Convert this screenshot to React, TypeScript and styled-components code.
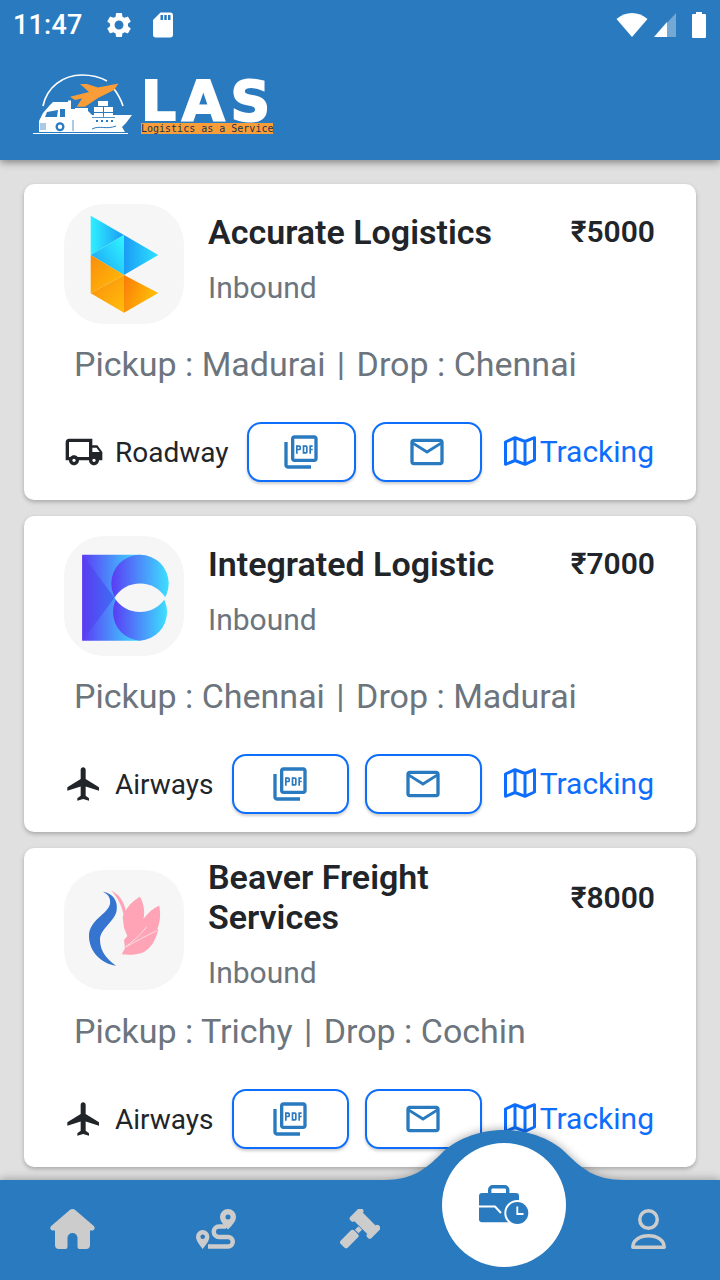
import React from 'react';

import {
    MdFlight,
    MdMailOutline,
    MdOutlineLocalShipping,
    MdOutlinePictureAsPdf,
    MdSdStorage,
    MdSettings,
} from 'react-icons/md';
import styled, { createGlobalStyle } from 'styled-components';

const BLUE = '#2a7abf';
const LINK = '#0d6efd';
const NAV_ICON = '#cccccc';

const GlobalStyle = createGlobalStyle`
    html, body {
        margin: 0;
        padding: 0;
        background: #e0e0e0;
    }

    * {
        box-sizing: border-box;
    }
`;

const Page = styled.div`
    position: relative;
    width: 720px;
    height: 1280px;
    overflow: hidden;
    background: #e0e0e0;
    font-family: Roboto, 'Noto Sans', sans-serif;
`;

const Header = styled.header`
    position: relative;
    z-index: 2;
    height: 160px;
    background: ${BLUE};
    box-shadow: 0 2px 8px rgba(0, 0, 0, 0.45);
`;

const StatusBar = styled.div`
    display: flex;
    align-items: center;
    height: 48px;
    padding: 2px 14px 0 13px;
    color: #fff;
`;

const Clock = styled.span`
    width: 91px;
    font-size: 27px;
    font-weight: 500;
    letter-spacing: 0.2px;
`;

const StatusLeft = styled.div`
    display: flex;
    align-items: center;
    flex: 1;
    gap: 14px;
    font-size: 30px;
`;

const StatusRight = styled.div`
    display: flex;
    align-items: center;
    gap: 6px;
`;

const LogoRow = styled.div`
    display: flex;
    align-items: center;
    height: 112px;
    padding: 2px 0 0 30px;
`;

const LogoMark = styled.svg`
    width: 105px;
    height: 80px;
`;

const LogoWords = styled.div`
    display: flex;
    flex-direction: column;
    width: 132px;
    margin: 2px 0 0 6px;
`;

const LogoName = styled.span`
    height: 44px;
    font-family: 'DejaVu Sans', sans-serif;
    font-size: 55px;
    font-weight: 700;
    line-height: 44px;
    letter-spacing: 6px;
    white-space: nowrap;
    color: #fff;
    -webkit-text-stroke: 2px #fff;
`;

const LogoTag = styled.span`
    height: 11px;
    background: #f99d39;
    font-family: 'DejaVu Sans Mono', monospace;
    font-size: 10px;
    line-height: 11px;
    white-space: nowrap;
    color: #24324f;
`;

const List = styled.main`
    display: flex;
    flex-direction: column;
    gap: 16px;
    padding: 24px;
`;

const Card = styled.article`
    display: flex;
    flex-direction: column;
    padding: 10px 41px 18px 40px;
    border-radius: 10px;
    background: #fff;
    box-shadow: 0 2px 4px rgba(0, 0, 0, 0.25);
`;

const TopRow = styled.div`
    display: flex;
    align-items: center;
`;

const Avatar = styled.div`
    flex: none;
    width: 120px;
    height: 120px;
    margin: 10px 24px 10px 0;
    border-radius: 40px;
    background: #f6f6f6;

    svg {
        display: block;
        width: 120px;
        height: 120px;
    }
`;

const Info = styled.div`
    flex: 1;
    margin-top: -1px;
    padding-bottom: 10px;
`;

const TitleRow = styled.div`
    display: flex;
    align-items: center;
    justify-content: space-between;
    margin-bottom: 18px;
`;

const Title = styled.h2`
    max-width: 340px;
    margin: 0;
    font-size: 34px;
    font-weight: 600;
    line-height: 40px;
    color: #212529;
`;

const Price = styled.span`
    font-size: 30px;
    font-weight: 600;
    color: #212529;
`;

const Direction = styled.div`
    font-size: 30px;
    line-height: 36px;
    color: #6c757d;
`;

const Route = styled.p`
    margin: 10px 0 38px 10px;
    font-size: 34px;
    line-height: 40px;
    color: #6c757d;
`;

const RouteDivider = styled.span`
    margin: 0 3px;
`;

const ActionRow = styled.div`
    display: flex;
    align-items: center;
    height: 60px;
    padding-right: 1px;
`;

const Mode = styled.div`
    display: flex;
    align-items: center;
    margin-right: 18px;
    font-size: 28px;
    color: #212529;

    svg {
        width: 40px;
        height: 40px;
        margin-right: 11px;
    }
`;

const DocButton = styled.button`
    flex: 1;
    display: flex;
    align-items: center;
    justify-content: center;
    height: 60px;
    margin-right: 16px;
    padding: 0;
    border: 2px solid ${LINK};
    border-radius: 14px;
    background: #fff;
    color: ${BLUE};
    box-shadow: 0 2px 3px rgba(0, 0, 0, 0.2);

    &:last-of-type {
        margin-right: 22px;
    }

    svg {
        width: 40px;
        height: 40px;
    }
`;

const TrackingLink = styled.a`
    display: flex;
    align-items: center;
    gap: 4px;
    padding-bottom: 2px;
    font-size: 30px;
    color: ${LINK};

    svg {
        width: 32px;
        height: 30px;
    }
`;

const BottomNav = styled.nav`
    position: absolute;
    left: 0;
    right: 0;
    bottom: 0;
    z-index: 3;
    display: grid;
    grid-template-columns: repeat(5, 144px);
    justify-items: center;
    height: 100px;
    padding-top: 29px;
    background: ${BLUE};
    color: ${NAV_ICON};
    filter: drop-shadow(0 -1px 4px rgba(0, 0, 0, 0.3));
`;

const Hump = styled.svg`
    position: absolute;
    left: 384px;
    top: -50px;
    width: 240px;
    height: 51px;
`;

const Fab = styled.button`
    position: absolute;
    left: 442px;
    top: -37px;
    display: flex;
    align-items: center;
    justify-content: center;
    width: 124px;
    height: 124px;
    padding: 0;
    border: 0;
    border-radius: 50%;
    background: #fff;
    color: ${BLUE};

    svg {
        width: 50px;
        height: 40px;
    }
`;

const NavIcon = styled.svg`
    display: block;
    height: 40px;
`;

const AccurateLogo = () => (
    <svg viewBox="0 0 120 120">
        <defs>
            <linearGradient id="acA" x1="0" y1="0" x2="1" y2="0">
                <stop offset="0" stopColor="#2ef0ff" />
                <stop offset="1" stopColor="#1b9bf5" />
            </linearGradient>
            <linearGradient id="acB" x1="1" y1="0.2" x2="0" y2="1">
                <stop offset="0" stopColor="#2ef0ff" />
                <stop offset="1" stopColor="#1b9bf5" />
            </linearGradient>
            <linearGradient id="acC" x1="0" y1="0" x2="1" y2="0">
                <stop offset="0" stopColor="#1b9bf5" />
                <stop offset="1" stopColor="#2ee2ff" />
            </linearGradient>
            <linearGradient id="acD" x1="0" y1="0" x2="1" y2="1">
                <stop offset="0" stopColor="#fb8c0c" />
                <stop offset="1" stopColor="#ffc107" />
            </linearGradient>
            <linearGradient id="acE" x1="0" y1="0" x2="1" y2="1">
                <stop offset="0" stopColor="#fb8c0c" />
                <stop offset="1" stopColor="#ffbe0a" />
            </linearGradient>
            <linearGradient id="acF" x1="0" y1="0" x2="1" y2="0.4">
                <stop offset="0" stopColor="#fb7a08" />
                <stop offset="1" stopColor="#ffc107" />
            </linearGradient>
        </defs>
        <polygon points="26.7,11.7 60,31 26.7,51" fill="url(#acA)" />
        <polygon points="26.7,51 60,31 60,71" fill="url(#acB)" />
        <polygon points="60,31 94.3,51 60,71" fill="url(#acC)" />
        <polygon points="26.7,51 60,71 26.7,89.3" fill="url(#acD)" />
        <polygon points="26.7,89.3 60,71 60,108.7" fill="url(#acE)" />
        <polygon points="60,71 94.3,89 60,108.7" fill="url(#acF)" />
    </svg>
);

const IntegratedLogo = () => (
    <svg viewBox="0 0 120 120">
        <defs>
            <linearGradient id="inA" x1="0" y1="0" x2="1" y2="0">
                <stop offset="0" stopColor="#5a3cf5" />
                <stop offset="1" stopColor="#3de0ff" />
            </linearGradient>
            <linearGradient id="inB" x1="0" y1="0" x2="1" y2="0">
                <stop offset="0" stopColor="#5a3cf0" />
                <stop offset="1" stopColor="#3f6df5" />
            </linearGradient>
        </defs>
        <path d="M18.3 18.7H76V104.7H18.3Z" fill="url(#inA)" />
        <path d="M18.3 18.7L50.5 61.7L18.3 104.7Z" fill="url(#inB)" />
        <path d="M76 18.7a28.7 28.7 0 0 1 0 57.4a28.7 28.7 0 0 1 0-57.4Z" fill="url(#inA)" />
        <path d="M76 47.4a28.7 28.7 0 0 1 0 57.3a28.7 28.7 0 0 1 0-57.3Z" fill="url(#inA)" />
        <path d="M50.5 61.7C56 52.5 65.5 47.4 76 47.4S96 52.5 101.5 61.7C96 70.9 86.500 76 76 76S56 70.9 50.5 61.7Z" fill="#f6f6f6" />
    </svg>
);

const BeaverLogo = () => (
    <svg viewBox="0 0 120 120">
        <path
            d="M38.7 21.7C49 23 54 31 52.7 40C51 52 36 58 36 70C36 82 44 90 52 95.7C38 94 25 82 25 66C25 50 44 44 46 34C47 28 44 24 38.7 21.7Z"
            fill="#3574cf"
        />
        <path d="M47.3 20.7C55 24 60 31 62 42L60 46C58 36 54 28 47.3 20.7Z" fill="#ffa4b6" />
        <path
            d="M58.7 46.7C62 38 68 31 76 26.700C80 34 81 42 79.500 49C84 43 89 38 95.300 35.700C97 45 96 53 93 59.300L94.300 59.300C92 70 86 81 76 83.500C70 85 63 85 57.700 84.300L61 78.300L60 70L63.300 66L60 58Z"
            fill="#ffa4b6"
        />
        <path d="M60 78C68 72 77 65 82.700 56.700M62 77C72 71 82 66 92.700 60.700" stroke="#fbdde3" strokeWidth="1" fill="none" />
    </svg>
);

const LasMark = () => (
    <LogoMark viewBox="0 0 105 80">
        <path d="M13 41C17 22 33 10 52 10C62 10 70 12 77 16M84 24C88 29 91 35 93 41" fill="none" stroke="#fff" strokeWidth="1.7" />
        <path
            d="M88.500 18.500L68 22.500L57 19H50L59 27L47 30L40 31.700L45 35L52 33.500L46.700 41.700H55L68 33L84 25Z"
            fill="#f99d39"
        />
        <path d="M3 68H98V69H3Z" fill="#fff" />
        <path
            d="M9 67V56L13 48L20 40L23 37H38V35.500H41V44H45V43H58V46L62 50H83H102L96 58L92 62L95 67Z"
            fill="#fff"
        />
        <path d="M17 47L28 45L27 52H15ZM30 44H35V52H30Z" fill={BLUE} />
        <path d="M11 58v7M13 58v7M15 58v7" stroke={BLUE} strokeWidth="0.8" />
        <circle cx="30" cy="61.700" r="4.500" fill={BLUE} />
        <circle cx="30" cy="61.700" r="2.200" fill="#fff" />
        <path d="M43 55V66" stroke={BLUE} strokeWidth="0.8" />
        <path d="M68 36H78V41H68ZM64 42H73V47H64ZM74 42H83V47H74ZM64 48H73V52H64ZM74 48H83V52H74Z" fill="#fff" />
        <path d="M62 41.500H85M62 47.500H85M73.500 41.500V52.500M62 52.500H85M67 36V41M79 36V41" stroke={BLUE} strokeWidth="0.8" />
        <path d="M66 55h2v2h-2zM71 55h2v2h-2zM76 55h2v2h-2zM81 55h2v2h-2z" fill={BLUE} />
        <path d="M62 64C70 60 76 65 86 61" fill="none" stroke={BLUE} strokeWidth="1" />
    </LogoMark>
);

const WifiIcon = () => (
    <svg width="32" height="24" viewBox="0 0 32 24">
        <path d="M16 24L0.500 6C5 2.200 10.200 0 16 0S27 2.200 31.500 6Z" fill="#fff" />
    </svg>
);

const CellIcon = () => (
    <svg width="22" height="24" viewBox="0 0 22 24">
        <path d="M22 0V24H0Z" fill="#fff" opacity="0.35" />
        <path d="M13 9V24H0Z" fill="#fff" />
    </svg>
);

const BatteryIcon = () => (
    <svg width="14" height="26" viewBox="0 0 14 26" style={{ marginLeft: 10 }}>
        <path d="M4 0H10V2H13A1 1 0 0 1 14 3V25A1 1 0 0 1 13 26H1A1 1 0 0 1 0 25V3A1 1 0 0 1 1 2H4Z" fill="#fff" />
    </svg>
);

const MapIcon = () => (
    <svg viewBox="0 0 32 30">
        <path
            d="M1.500 6L11 1.700L21 5.500L30.500 1.700V24L21 28.300L11 24.500L1.500 28.300ZM11 1.700V24.500M21 5.500V28.300"
            fill="none"
            stroke="currentColor"
            strokeWidth="3"
            strokeLinejoin="round"
        />
    </svg>
);

const HomeIcon = () => (
    <NavIcon viewBox="0 0 45 40" width="45">
        <path
            d="M22.500 0c1 0 2 .4 2.700 1L43.800 17c1.800 1.600.7 4.500-1.700 4.500H40V36a4 4 0 0 1-4 4H29.500a2 2 0 0 1-2-2V29a5 5 0 0 0-10 0v9a2 2 0 0 1-2 2H9a4 4 0 0 1-4-4V21.500H2.900c-2.400 0-3.500-2.900-1.700-4.500L19.800 1c.7-.6 1.700-1 2.700-1Z"
            fill="currentColor"
        />
    </NavIcon>
);

const RouteIcon = () => (
    <NavIcon viewBox="0 0 40 40" width="40">
        <path
            fillRule="evenodd"
            d="M32 0a8 8 0 0 1 8 8c0 4.500-5 9.500-8 12.500c-3-3-8-8-8-12.500a8 8 0 0 1 8-8Zm0 5.500a2.500 2.500 0 1 0 0 5a2.500 2.500 0 0 0 0-5Z"
            fill="currentColor"
        />
        <path
            fillRule="evenodd"
            d="M6.700 21a6.700 6.700 0 0 1 6.700 6.700c0 4-3.800 8.500-6.700 12.300C3.800 36.200 0 31.700 0 27.700A6.700 6.700 0 0 1 6.700 21Zm0 4.500a2.300 2.300 0 1 0 0 4.600a2.300 2.300 0 0 0 0-4.600Z"
            fill="currentColor"
        />
        <path d="M30 17.500H23a5.250 5.250 0 0 0 0 10.500H32a4.500 4.500 0 0 1 0 9.500H12" fill="none" stroke="currentColor" strokeWidth="4.500" />
    </NavIcon>
);

const GavelIcon = () => (
    <NavIcon viewBox="0 0 40 40" width="40">
        <g transform="rotate(45 25 14.300)" fill="currentColor">
            <rect x="15" y="8.300" width="20" height="12" />
            <rect x="10" y="6" width="6" height="16.500" rx="2.500" />
            <rect x="34" y="6" width="6" height="16.500" rx="2.500" />
            <rect x="22.500" y="21" width="5" height="5" />
            <rect x="20" y="27" width="10" height="19" rx="2.500" />
        </g>
    </NavIcon>
);

const UserIcon = () => (
    <NavIcon viewBox="0 0 35 40" width="35">
        <circle cx="17.500" cy="10.500" r="8.750" fill="none" stroke="currentColor" strokeWidth="3.500" />
        <path d="M1.800 38.200c0-7 7-11.500 15.700-11.500s15.700 4.500 15.700 11.500Z" fill="none" stroke="currentColor" strokeWidth="3.500" strokeLinejoin="round" />
    </NavIcon>
);

const JobHistoryIcon = () => (
    <svg viewBox="0 0 50 40">
        <rect x="10.700" y="1.700" width="18" height="9" rx="3" fill="none" stroke="currentColor" strokeWidth="3.400" />
        <path d="M3 8H37A3 3 0 0 1 40 11V34.300A3 3 0 0 1 37 37.300H3A3 3 0 0 1 0 34.300V11A3 3 0 0 1 3 8Z" fill="currentColor" />
        <path d="M0 21.500H16L22 28" fill="none" stroke="#fff" strokeWidth="2" />
        <circle cx="38.300" cy="28" r="13" fill="#fff" />
        <circle cx="38.300" cy="28" r="11" fill="currentColor" />
        <path d="M38.300 21.500V29H44.500" fill="none" stroke="#fff" strokeWidth="1.800" />
    </svg>
);

interface Shipment {
    id: number;
    company: string;
    price: number;
    pickup: string;
    drop: string;
    mode: 'Roadway' | 'Airways';
    logo: React.ReactNode;
}

const shipments: Shipment[] = [
    { id: 1, company: 'Accurate Logistics', price: 5000, pickup: 'Madurai', drop: 'Chennai', mode: 'Roadway', logo: <AccurateLogo /> },
    { id: 2, company: 'Integrated Logistic', price: 7000, pickup: 'Chennai', drop: 'Madurai', mode: 'Airways', logo: <IntegratedLogo /> },
    { id: 3, company: 'Beaver Freight Services', price: 8000, pickup: 'Trichy', drop: 'Cochin', mode: 'Airways', logo: <BeaverLogo /> },
];

const App: React.FC = () => (
    <Page>
        <GlobalStyle />
        <Header>
            <StatusBar>
                <Clock>11:47</Clock>
                <StatusLeft>
                    <MdSettings />
                    <MdSdStorage />
                </StatusLeft>
                <StatusRight>
                    <WifiIcon />
                    <CellIcon />
                    <BatteryIcon />
                </StatusRight>
            </StatusBar>
            <LogoRow>
                <LasMark />
                <LogoWords>
                    <LogoName>LAS</LogoName>
                    <LogoTag>Logistics as a Service</LogoTag>
                </LogoWords>
            </LogoRow>
        </Header>
        <List>
            {shipments.map((item) => (
                <Card key={item.id}>
                    <TopRow>
                        <Avatar>{item.logo}</Avatar>
                        <Info>
                            <TitleRow>
                                <Title>{item.company}</Title>
                                <Price>₹{item.price}</Price>
                            </TitleRow>
                            <Direction>Inbound</Direction>
                        </Info>
                    </TopRow>
                    <Route>
                        Pickup : {item.pickup} <RouteDivider>|</RouteDivider> Drop : {item.drop}
                    </Route>
                    <ActionRow>
                        <Mode>
                            {item.mode === 'Roadway' ? <MdOutlineLocalShipping /> : <MdFlight />}
                            {item.mode}
                        </Mode>
                        <DocButton>
                            <MdOutlinePictureAsPdf />
                        </DocButton>
                        <DocButton>
                            <MdMailOutline />
                        </DocButton>
                        <TrackingLink>
                            <MapIcon />
                            Tracking
                        </TrackingLink>
                    </ActionRow>
                </Card>
            ))}
        </List>
        <BottomNav>
            <Hump viewBox="0 0 240 51">
                <path d="M0 50C30 50 42 38 56 25C70 10 94 0 120 0C146 0 170 10 184 25C198 38 210 50 240 50V51H0Z" fill={BLUE} />
            </Hump>
            <HomeIcon />
            <RouteIcon />
            <GavelIcon />
            <span />
            <UserIcon />
            <Fab>
                <JobHistoryIcon />
            </Fab>
        </BottomNav>
    </Page>
);

export default App;
